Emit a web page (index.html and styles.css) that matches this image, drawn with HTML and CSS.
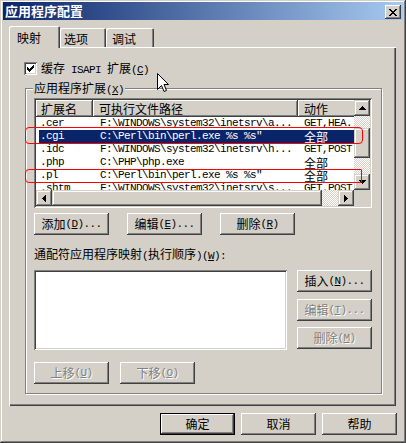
FILE: index.html
```html
<!DOCTYPE html>
<html lang="zh-CN">
<head>
<meta charset="utf-8">
<title>应用程序配置</title>
<link rel="stylesheet" href="styles.css">
</head>
<body>
<div class="window">
  <div class="titlebar">
    <span class="title">应用程序配置</span>
    <span class="close"><svg width="8" height="7" viewBox="0 0 8 7" shape-rendering="crispEdges"><path d="M0 0h2v1H0zM6 0h2v1H6zM1 1h2v1H1zM5 1h2v1H5zM2 2h4v1H2zM3 3h2v1H3zM2 4h4v1H2zM1 5h2v1H1zM5 5h2v1H5zM0 6h2v1H0zM6 6h2v1H6z" fill="#000"/></svg></span>
  </div>
  <div class="tabs">
    <div class="tab active">映射</div>
    <div class="tab t2">选项</div>
    <div class="tab t3">调试</div>
  </div>
  <div class="panel">
    <div class="check">
      <span class="cbox"><svg width="7" height="7" viewBox="0 0 7 7" shape-rendering="crispEdges"><path d="M6 0h1v1H6zM5 1h2v1H5zM0 2h1v1H0zM4 2h3v1H4zM0 3h2v1H0zM3 3h3v1H3zM0 4h5v1H0zM1 5h3v1H1zM2 6h1v1H2z" fill="#000"/></svg></span>
      <span>缓存<span class="a"> ISAPI </span>扩展<span class="a">(<u>C</u>)</span></span>
    </div>
    <div class="group">
      <span class="legend">应用程序扩展<span class="a">(<u>X</u>)</span></span>
      <div class="listview">
        <div class="lv-main">
          <div class="lv-head">
            <div class="hcell c1">扩展名</div>
            <div class="hcell c2">可执行文件路径</div>
            <div class="hcell c3">动作</div>
          </div>
          <div class="row"><span class="c1">.cer</span><span class="c2">F:\WINDOWS\system32\inetsrv\a...</span><span class="c3">GET,HEA...</span></div>
          <div class="row sel"><span class="c1">.cgi</span><span class="c2">C:\Perl\bin\perl.exe %s %s"</span><span class="c3"><span class="cjk">全部</span></span></div>
          <div class="row"><span class="c1">.idc</span><span class="c2">F:\WINDOWS\system32\inetsrv\h...</span><span class="c3">GET,POST</span></div>
          <div class="row"><span class="c1">.php</span><span class="c2">C:\PHP\php.exe</span><span class="c3"><span class="cjk">全部</span></span></div>
          <div class="row"><span class="c1">.pl</span><span class="c2">C:\Perl\bin\perl.exe %s %s"</span><span class="c3"><span class="cjk">全部</span></span></div>
          <div class="row"><span class="c1">.shtm</span><span class="c2">F:\WINDOWS\system32\inetsrv\s...</span><span class="c3">GET,POST</span></div>
        </div>
        <div class="vscroll">
          <span class="sbtn"><svg width="7" height="4" viewBox="0 0 7 4" shape-rendering="crispEdges"><path d="M3 0h1v1H3zM2 1h3v1H2zM1 2h5v1H1zM0 3h7v1H0z" fill="#000"/></svg></span>
          <span class="track vt1"></span>
          <span class="thumb vthumb"></span>
          <span class="track vt2"></span>
          <span class="sbtn"><svg width="7" height="4" viewBox="0 0 7 4" shape-rendering="crispEdges"><path d="M0 0h7v1H0zM1 1h5v1H1zM2 2h3v1H2zM3 3h1v1H3z" fill="#000"/></svg></span>
        </div>
        <div class="hscroll">
          <span class="sbtn"><svg width="4" height="7" viewBox="0 0 4 7" shape-rendering="crispEdges"><path d="M3 0h1v7H3zM2 1h1v5H2zM1 2h1v3H1zM0 3h1v1H0z" fill="#000"/></svg></span>
          <span class="thumb hthumb"></span>
          <span class="track ht"></span>
          <span class="sbtn"><svg width="4" height="7" viewBox="0 0 4 7" shape-rendering="crispEdges"><path d="M0 0h1v7H0zM1 1h1v5H1zM2 2h1v3H2zM3 3h1v1H3z" fill="#000"/></svg></span>
        </div>
        <div class="corner"></div>
      </div>
      <div class="btnrow r1">
        <span class="btn">添加<span class="a">(<u>D</u>)...</span></span>
        <span class="btn">编辑<span class="a">(<u>E</u>)...</span></span>
        <span class="btn">删除<span class="a">(<u>R</u>)</span></span>
      </div>
      <div class="wlabel">通配符应用程序映射<span class="a">(</span>执行顺序<span class="a">)(<u>W</u>):</span></div>
      <div class="wild">
        <div class="wildlist"></div>
        <div class="side">
          <span class="btn">插入<span class="a">(<u>N</u>)...</span></span>
          <span class="btn dis">编辑<span class="a">(<u>T</u>)...</span></span>
          <span class="btn dis">删除<span class="a">(<u>M</u>)</span></span>
        </div>
      </div>
      <div class="btnrow r2">
        <span class="btn dis">上移<span class="a">(<u>U</u>)</span></span>
        <span class="btn dis">下移<span class="a">(<u>O</u>)</span></span>
      </div>
    </div>
  </div>
  <div class="footer">
    <span class="btn def">确定</span>
    <span class="btn">取消</span>
    <span class="btn">帮助</span>
  </div>
  <div class="mark m1"></div>
  <div class="mark m2"></div>
  <svg class="cursor" width="12" height="20" viewBox="0 0 12 20"><path d="M0.5 0.5V16.5L4.5 12.5L7 18.5L9.5 17.5L7 11.5H11.5Z" fill="#fff" stroke="#000" stroke-width="1" stroke-linejoin="miter"/></svg>
</div>
</body>
</html>
```

FILE: styles.css
```css
* { box-sizing: border-box; }
body {
  margin: 0;
  background: #d4d0c8;
  font-family: "Noto Sans CJK SC", "Noto Sans", sans-serif;
  font-size: 12px;
  line-height: 14px;
  color: #000;
}
u { text-decoration: underline; text-underline-offset: 1px; }
.a {
  font-family: "Liberation Mono", monospace;
  font-size: 11px;
  letter-spacing: -0.6px;
}
.window {
  position: relative;
  width: 406px;
  height: 443px;
  background: #d4d0c8;
  padding: 2px 3px 3px;
  box-shadow: inset -1px -1px #404040, inset 1px 1px #d4d0c8, inset -2px -2px #808080, inset 2px 2px #fff;
}
.titlebar {
  height: 18px;
  display: flex;
  align-items: center;
  justify-content: space-between;
  padding: 0 2px;
  background: linear-gradient(to right, #0a246a, #a6caf0);
}
.title {
  color: #fff;
  font-weight: bold;
  font-size: 13px;
  line-height: 16px;
}
.close {
  width: 16px;
  height: 14px;
  margin-top: 2px;
  display: flex;
  align-items: center;
  justify-content: center;
  background: #d4d0c8;
  box-shadow: inset -1px -1px #404040, inset 1px 1px #fff, inset -2px -2px #808080;
}
.tabs {
  display: flex;
  align-items: flex-end;
  height: 21px;
  margin: 6px 0 0 6px;
}
.tab {
  height: 19px;
  padding: 4px 0 0 4px;
  background: #d4d0c8;
  border-radius: 2px 2px 0 0;
  box-shadow: inset 1px 1px #fff, inset -1px 0 #404040, inset -2px 0 #808080;
}
.tab.active {
  position: relative;
  z-index: 1;
  width: 51px;
  height: 22px;
  margin-bottom: -1px;
  padding: 5px 0 0 8px;
  box-shadow: inset 1px 1px #fff, inset -1px 0 #404040, inset -2px 0 #808080;
}
.tab.t2 { width: 46px; }
.tab.t3 { width: 48px; padding-left: 6px; }
.panel {
  width: 387px;
  height: 359px;
  margin-left: 6px;
  padding: 15px 0 0 15px;
  box-shadow: inset 1px 1px #fff, inset -1px -1px #404040, inset -2px -2px #808080;
}
.check {
  display: flex;
  align-items: center;
  gap: 4px;
  height: 13px;
}
.cbox {
  width: 13px;
  height: 13px;
  padding: 3px;
  background: #fff;
  box-shadow: inset 1px 1px #808080, inset -1px -1px #fff, inset 2px 2px #404040, inset -2px -2px #d4d0c8;
  display: flex;
}
.group {
  position: relative;
  width: 357px;
  margin: 13px 0 0 1px;
  padding: 9px 8px 9px 8px;
  border: 1px solid #808080;
  box-shadow: 1px 1px #fff, inset 1px 1px #fff;
}
.legend {
  position: absolute;
  top: -8px;
  left: 7px;
  padding: 0 1px;
  background: #d4d0c8;
  line-height: 14px;
}
.listview {
  width: 338px;
  height: 110px;
  padding: 2px;
  background: #fff;
  box-shadow: inset 1px 1px #808080, inset -1px -1px #fff, inset 2px 2px #404040, inset -2px -2px #d4d0c8;
  display: grid;
  grid-template-columns: 318px 16px;
  grid-template-rows: 90px 16px;
}
.lv-main {
  overflow: hidden;
  background: #fff;
}
.lv-head {
  display: flex;
  width: max-content;
  height: 17px;
}
.hcell {
  flex: none;
  height: 17px;
  line-height: 17px;
  padding-left: 5px;
  white-space: nowrap;
  background: #d4d0c8;
  box-shadow: inset -1px -1px #404040, inset 1px 1px #fff, inset -2px -2px #808080;
}
.hcell.c1 { width: 57px; }
.hcell.c2 { width: 205px; padding-left: 6px; }
.hcell.c3 { width: 80px; padding-left: 6px; }
.row {
  display: flex;
  align-items: flex-start;
  width: max-content;
  height: 13px;
  margin-left: 3px;
  line-height: 13px;
  overflow: hidden;
  white-space: nowrap;
  font-family: "Liberation Mono", monospace;
  font-size: 11px;
  letter-spacing: -0.6px;
}
.row > span { flex: none; display: block; height: 13px; }
.row .c1 { width: 54px; padding-left: 1px; }
.row .c2 { width: 205px; padding-left: 7px; }
.row .c3 { width: 80px; padding-left: 6px; }
.row .cjk {
  display: block;
  height: 13px;
  font-family: "Noto Sans CJK SC", sans-serif;
  font-size: 12px;
  line-height: 13px;
  letter-spacing: 0;
}
.row.sel { background: #0a246a; color: #fff; }
.vscroll {
  display: flex;
  flex-direction: column;
}
.hscroll {
  display: flex;
}
.sbtn {
  flex: none;
  width: 16px;
  height: 16px;
  display: flex;
  align-items: center;
  justify-content: center;
  background: #d4d0c8;
  box-shadow: inset -1px -1px #404040, inset 1px 1px #d4d0c8, inset -2px -2px #808080, inset 2px 2px #fff;
}
.thumb {
  flex: none;
  background: #d4d0c8;
  box-shadow: inset -1px -1px #404040, inset 1px 1px #d4d0c8, inset -2px -2px #808080, inset 2px 2px #fff;
}
.track {
  background: repeating-conic-gradient(#d4d0c8 0 25%, #fff 0 50%) 0 0 / 2px 2px;
}
.vt1 { height: 12px; flex: none; }
.vthumb { height: 30px; }
.vt2 { flex: 1; }
.hthumb { width: 270px; }
.ht { flex: 1; }
.corner { background: #d4d0c8; }
.btn {
  flex: none;
  width: 75px;
  height: 22px;
  display: flex;
  align-items: center;
  justify-content: center;
  white-space: nowrap;
  background: #d4d0c8;
  box-shadow: inset -1px -1px #404040, inset 1px 1px #fff, inset -2px -2px #808080;
}
.btn.dis {
  color: #808080;
  text-shadow: 1px 1px 0 #fff;
}
.btn.def {
  box-shadow: inset 0 0 0 1px #000, inset -2px -2px #404040, inset 2px 2px #fff, inset -3px -3px #808080;
}
.btnrow { display: flex; }
.r1 { margin-top: 5px; gap: 18px; }
.r2 { margin-top: 12px; gap: 11px; }
.wlabel { margin-top: 12px; line-height: 14px; white-space: nowrap; }
.wild {
  display: flex;
  gap: 10px;
  margin-top: 7px;
}
.wildlist {
  width: 253px;
  height: 80px;
  background: #fff;
  box-shadow: inset 1px 1px #808080, inset -1px -1px #fff, inset 2px 2px #404040, inset -2px -2px #d4d0c8;
}
.side {
  display: flex;
  flex-direction: column;
  gap: 6.5px;
}
.footer {
  display: flex;
  justify-content: flex-end;
  gap: 6px;
  margin-top: 7px;
  padding-right: 6px;
}
.mark {
  position: absolute;
  border: 1px solid #f00;
}
.m1 { left: 25px; top: 127px; width: 338px; height: 17px; border-radius: 4px; }
.m2 { left: 25px; top: 169px; width: 337px; height: 14px; border-radius: 4px 1px 1px 4px; }
.cursor {
  position: absolute;
  left: 157px;
  top: 73px;
}
```
